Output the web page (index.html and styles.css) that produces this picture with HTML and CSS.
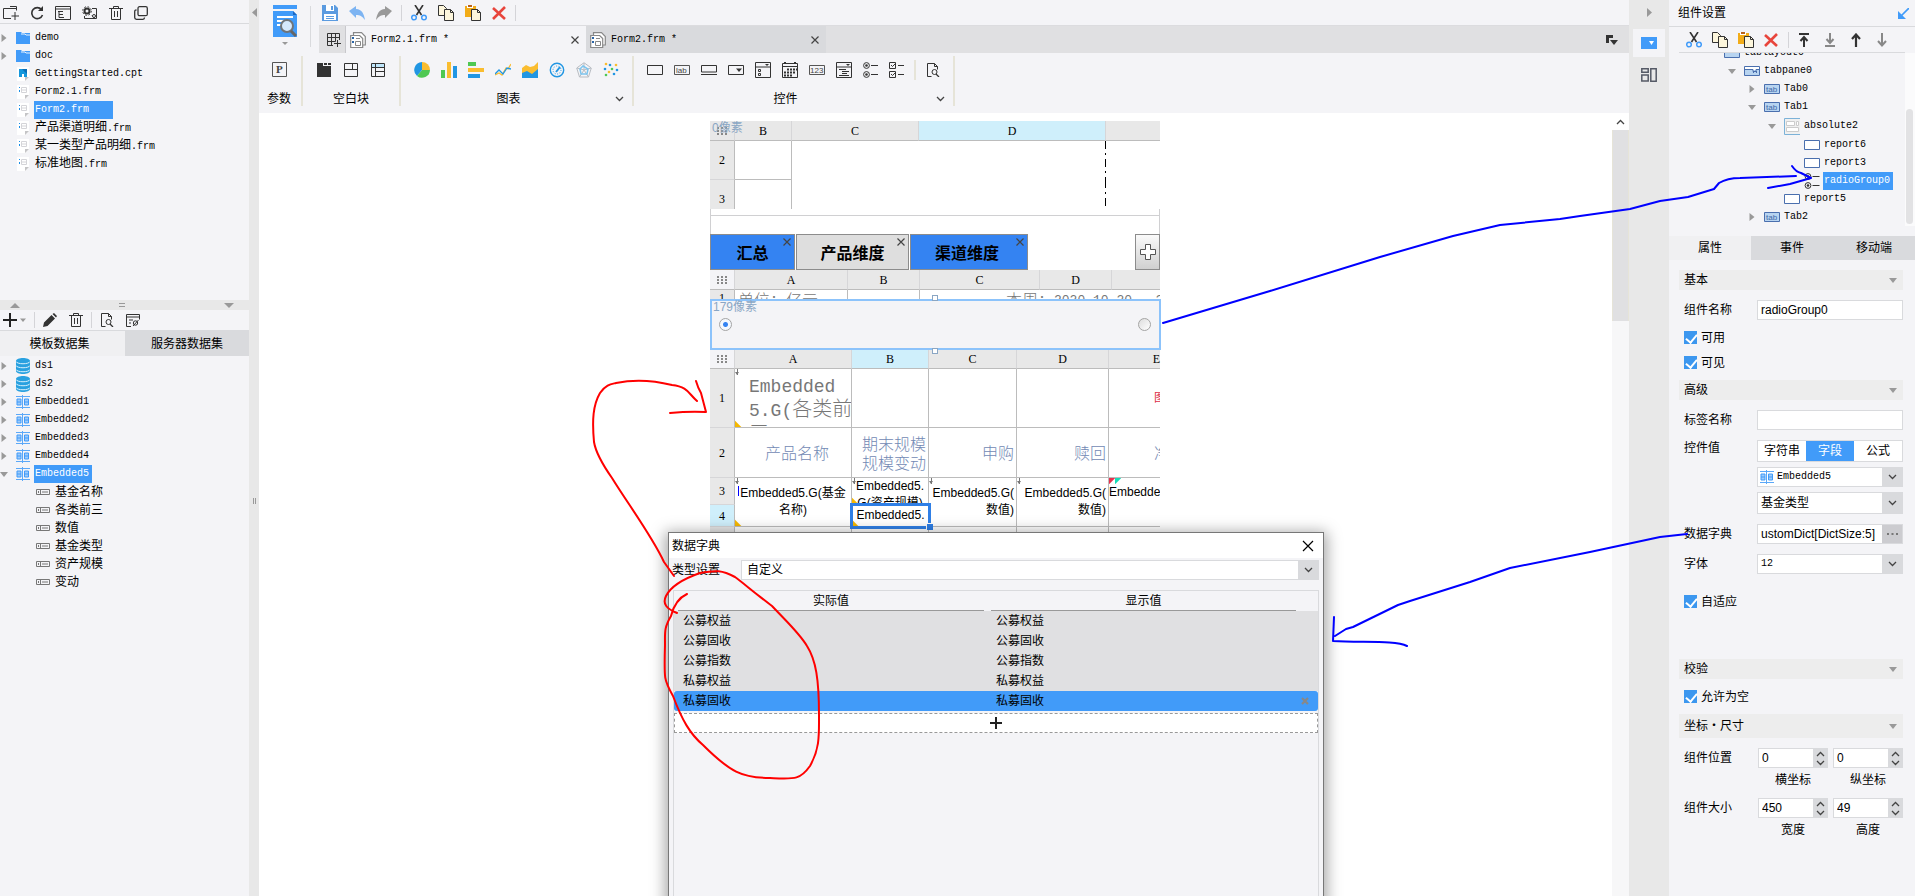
FILE: index.html
```html
<!DOCTYPE html>
<html lang="zh-CN">
<head>
<meta charset="utf-8">
<title>Form2.1.frm</title>
<link rel="stylesheet" href="styles.css">
</head>
<body>
<svg class="defs" aria-hidden="true">
  <symbol id="i-folder" viewBox="0 0 14 12"><path d="M0 0h5l1 1h8v11H0z" fill="#419bf9"/><path d="M5 2h4l1 1h4" stroke="#e8f2fe" fill="none"/></symbol>
  <symbol id="i-cpt" viewBox="0 0 12 14"><path d="M0 0h12v10l-4 4H0z" fill="#fff"/><path d="M2 2h8v8H7V7H5v3H2z" fill="#1597dc"/><path d="M5 2h5v5z" fill="#0a6fb8"/><path d="M8 10h4l-4 4z" fill="#c4c4c6"/></symbol>
  <symbol id="i-frm" viewBox="0 0 12 14"><path d="M0 0h12v10l-4 4H0z" fill="#fff"/><path d="M4.500 2.500h5v5h-5zM5 5h5" fill="none" stroke="#d4d4d8"/><path d="M2 2h1v1H2zM2 5h1v2H2z" fill="#1b8ee6"/><path d="M8 10h4l-4 4z" fill="#c4c4c6"/></symbol>
  <symbol id="i-db" viewBox="0 0 14 16"><path d="M0 3c0-4 14-4 14 0v10c0 4-14 4-14 0z" fill="#29a1e0"/><path d="M0 3.500c1 3 13 3 14 0M0 7.500c1 3 13 3 14 0M0 11.500c1 3 13 3 14 0" stroke="#d9f0fb" fill="none"/></symbol>
  <symbol id="i-emb" viewBox="0 0 14 14"><path d="M0 1.500h14M0 12.500h14M6.500 0v14" stroke="#5ba8f8" fill="none"/><path d="M1 4h4v6H1zM8.500 4h4v6h-4z" fill="#9dcbfb" stroke="#419bf9"/><path d="M1 7h4M8.500 7h4" stroke="#419bf9"/></symbol>
  <symbol id="i-field" viewBox="0 0 14 6"><path d="M.5.5h13v5H.5zM4.500 1v4M6 3h6" stroke="#777" fill="none"/><path d="M2 2h1v2H2z" fill="#777"/></symbol>
  <symbol id="i-cut" viewBox="0 0 16 16"><path d="M4 0l6.500 10M12 0L5.500 10" stroke="#333" stroke-width="1.600" fill="none"/><circle cx="3" cy="12.500" r="2.300" fill="none" stroke="#419bf9" stroke-width="1.500"/><circle cx="13" cy="12.500" r="2.300" fill="none" stroke="#419bf9" stroke-width="1.500"/></symbol>
  <symbol id="i-copy" viewBox="0 0 16 16"><path d="M.5.5h5l3 3v7h-8z" fill="#fdf6dc" stroke="#333"/><path d="M6.500 4.500h6l3 3v8h-9z" fill="#fdf6dc" stroke="#333"/><path d="M12.500 4.500v3h3" fill="none" stroke="#333"/></symbol>
  <symbol id="i-paste" viewBox="0 0 16 16"><path d="M0 1h11v11H0z" fill="#f2ac18"/><path d="M2 0h6v3H2z" fill="#fff"/><path d="M3 0h4v2H3z" fill="#b9631a"/><path d="M6.500 4.500h6l3 3v8h-9z" fill="#fdf6dc" stroke="#333"/><path d="M12.500 4.500v3h3" fill="none" stroke="#333"/></symbol>
  <symbol id="i-del" viewBox="0 0 14 14"><path d="M1 2l12 11M13 1L1 13" stroke="#e8453c" stroke-width="2.600" fill="none"/></symbol>
  <symbol id="i-trash" viewBox="0 0 14 14"><path d="M0 2.500h14M4.500 2V.5h5V2M2.500 3v10.500h9V3M5.500 5v6M8.500 5v6" stroke="#333" fill="none"/></symbol>
  <symbol id="i-down" viewBox="0 0 9 6"><path d="M1 1l3.500 3.500L8 1" stroke="#444" stroke-width="1.300" fill="none"/></symbol>
  <symbol id="i-up" viewBox="0 0 9 6"><path d="M1 5l3.500-3.500L8 5" stroke="#444" stroke-width="1.300" fill="none"/></symbol>
  <symbol id="i-x" viewBox="0 0 8 8"><path d="M.5.5l7 7M7.500.5l-7 7" stroke="#444" stroke-width="1.200" fill="none"/></symbol>
  <symbol id="i-preview" viewBox="0 0 14 14"><path d="M5.500 13.500h-4V.5h7l3 3v3M8.500.5v3h3" stroke="#333" fill="none"/><circle cx="8.500" cy="9" r="2.500" fill="none" stroke="#333"/><path d="M10 11l3 3" stroke="#333" stroke-width="1.300"/></symbol>
  <symbol id="i-radios" viewBox="0 0 15 16"><g fill="none" stroke="#333"><circle cx="3.500" cy="3.500" r="2.900"/><circle cx="3.500" cy="12.500" r="2.900"/><path d="M8 3.500h7M8 12.500h7"/></g><circle cx="3.500" cy="3.500" r="1.300" fill="#333"/><circle cx="3.500" cy="12.500" r="1.300" fill="#333"/></symbol>
  <symbol id="i-form" viewBox="0 0 16 16"><path d="M3.500 3V.7h8l3.800 3.800V13H13" fill="#fff" stroke="#888" stroke-width="1.200"/><path d="M.7 3.500h9l3 3v9H.7z" fill="#fff" stroke="#888" stroke-width="1.200"/><path d="M2 5h2v2H2zM2 9h2v2H2z" fill="#2a66a8"/><path d="M5.500 9.500h5v4h-5zM6 6.500h4" fill="none" stroke="#888"/></symbol>
  <symbol id="i-right" viewBox="0 0 5 8"><path d="M0 0l5 4-5 4z" fill="#999"/></symbol>
  <symbol id="i-open" viewBox="0 0 8 5"><path d="M0 0h8L4 5z" fill="#999"/></symbol>
  <symbol id="i-rect" viewBox="0 0 16 10"><path d="M.5.5h15v9H.5z" fill="#fff" stroke="#4a6fae"/></symbol>
  <symbol id="i-grip" viewBox="0 0 10 8"><path d="M0 0h2v2H0zM4 0h2v2H4zM8 0h2v2H8zM0 3h2v2H0zM4 3h2v2H4zM8 3h2v2H8zM0 6h2v2H0zM4 6h2v2H4zM8 6h2v2H8z" fill="#888"/></symbol>
</svg>

<div class="app">
  <aside class="left">
    <div class="toolbar files-bar">
      <button aria-label="新建文件夹"><svg width="16" height="14"><path d="M8 12.500H.5v-10h5M7 .5h6.500v4M5 2.500h8M12 6v8M8.500 10H16" stroke="#333" fill="none"/></svg></button>
      <button aria-label="刷新"><svg width="14" height="14"><path d="M11.500 3.500A5.500 5.500 0 1 0 12.500 9" stroke="#333" stroke-width="1.600" fill="none"/><path d="M13 0v5H8z" fill="#333"/></svg></button>
      <button aria-label="定位"><svg width="16" height="14"><path d="M.5.5h15v13H.5zM.5 3h15M3 5.500h5M4 5.500v6M4 8.500h4M4 11.500h5" stroke="#333" fill="none"/></svg></button>
      <button aria-label="设置"><svg width="16" height="14"><path d="M10 2.500h4.500v10H2.500V10M10 9.500l3 3" stroke="#333" fill="none"/><circle cx="5" cy="5" r="2.500" stroke="#333" stroke-width="2" fill="none"/><circle cx="5" cy="5" r="4.300" stroke="#333" stroke-dasharray="1.700 1.700" fill="none"/><circle cx="12" cy="10" r="1.500" stroke="#333" fill="#f4f4f7"/></svg></button>
      <button aria-label="删除"><svg width="14" height="14"><use href="#i-trash"/></svg></button>
      <button aria-label="复制"><svg width="14" height="14"><rect x="4" y=".7" width="9.300" height="9" rx="1.500" fill="none" stroke="#333" stroke-width="1.300"/><path d="M2.500 4C1 4 .7 4.500.7 6v5.500c0 1 .6 1.800 1.800 1.800H9c1 0 1.500-.8 1.500-1.800" fill="none" stroke="#333" stroke-width="1.300"/></svg></button>
    </div>
    <ul class="tree files">
      <li><svg class="tw" width="5" height="8"><use href="#i-right"/></svg><svg class="ic" width="14" height="12"><use href="#i-folder"/></svg><span class="m">demo</span></li>
      <li><svg class="tw" width="5" height="8"><use href="#i-right"/></svg><svg class="ic" width="14" height="12"><use href="#i-folder"/></svg><span class="m">doc</span></li>
      <li><i class="tw"></i><svg class="ic" width="14" height="14"><use href="#i-cpt"/></svg><span class="m">GettingStarted.cpt</span></li>
      <li><i class="tw"></i><svg class="ic" width="14" height="14"><use href="#i-frm"/></svg><span class="m">Form2.1.frm</span></li>
      <li><i class="tw"></i><svg class="ic" width="14" height="14"><use href="#i-frm"/></svg><span class="m sel wide">Form2.frm</span></li>
      <li><i class="tw"></i><svg class="ic" width="14" height="14"><use href="#i-frm"/></svg><span>产品渠道明细<span class="m">.frm</span></span></li>
      <li><i class="tw"></i><svg class="ic" width="14" height="14"><use href="#i-frm"/></svg><span>某一类型产品明细<span class="m">.frm</span></span></li>
      <li><i class="tw"></i><svg class="ic" width="14" height="14"><use href="#i-frm"/></svg><span>标准地图<span class="m">.frm</span></span></li>
    </ul>
    <div class="hsplit">
      <svg width="10" height="5"><path d="M0 5h10L5 0z" fill="#999"/></svg>
      <svg width="6" height="4"><path d="M0 .5h6M0 3.500h6" stroke="#999"/></svg>
      <svg width="10" height="5"><path d="M0 0h10L5 5z" fill="#999"/></svg>
    </div>
    <div class="toolbar ds-bar">
      <button aria-label="添加"><svg width="23" height="14"><path d="M7 0v14M0 7h14" stroke="#222" stroke-width="2"/><path d="M17 5.500h6l-3 3.500z" fill="#999"/></svg></button>
      <i class="vr"></i>
      <button aria-label="编辑"><svg width="14" height="14"><path d="M0 14l1-4.500 7.500-7.500 3.500 3.500L4.500 13zM9.500 1L11 0l3 3-1 1.500z" fill="#333"/></svg></button>
      <button aria-label="删除"><svg width="14" height="14"><use href="#i-trash"/></svg></button>
      <i class="vr"></i>
      <button aria-label="预览"><svg width="14" height="14"><use href="#i-preview"/></svg></button>
      <button aria-label="属性"><svg width="14" height="13"><path d="M5 12.500H.5V.5h13v5M.5 3h13M3 6h4M3 9h2" stroke="#333" fill="none"/><circle cx="9.500" cy="9" r="2.200" stroke="#333" fill="none"/><path d="M7 12l5.500-6" stroke="#333"/></svg></button>
    </div>
    <div class="ds-tabs"><button class="on">模板数据集</button><button>服务器数据集</button></div>
    <ul class="tree sets">
      <li><svg class="tw" width="5" height="8"><use href="#i-right"/></svg><svg class="ic" width="14" height="16"><use href="#i-db"/></svg><span class="m">ds1</span></li>
      <li><svg class="tw" width="5" height="8"><use href="#i-right"/></svg><svg class="ic" width="14" height="16"><use href="#i-db"/></svg><span class="m">ds2</span></li>
      <li><svg class="tw" width="5" height="8"><use href="#i-right"/></svg><svg class="ic" width="14" height="14"><use href="#i-emb"/></svg><span class="m">Embedded1</span></li>
      <li><svg class="tw" width="5" height="8"><use href="#i-right"/></svg><svg class="ic" width="14" height="14"><use href="#i-emb"/></svg><span class="m">Embedded2</span></li>
      <li><svg class="tw" width="5" height="8"><use href="#i-right"/></svg><svg class="ic" width="14" height="14"><use href="#i-emb"/></svg><span class="m">Embedded3</span></li>
      <li><svg class="tw" width="5" height="8"><use href="#i-right"/></svg><svg class="ic" width="14" height="14"><use href="#i-emb"/></svg><span class="m">Embedded4</span></li>
      <li><svg class="tw" width="7" height="5"><use href="#i-open"/></svg><svg class="ic" width="14" height="14"><use href="#i-emb"/></svg><span class="m sel">Embedded5</span></li>
      <li class="sub"><svg class="ic" width="14" height="6"><use href="#i-field"/></svg><span>基金名称</span></li>
      <li class="sub"><svg class="ic" width="14" height="6"><use href="#i-field"/></svg><span>各类前三</span></li>
      <li class="sub"><svg class="ic" width="14" height="6"><use href="#i-field"/></svg><span>数值</span></li>
      <li class="sub"><svg class="ic" width="14" height="6"><use href="#i-field"/></svg><span>基金类型</span></li>
      <li class="sub"><svg class="ic" width="14" height="6"><use href="#i-field"/></svg><span>资产规模</span></li>
      <li class="sub"><svg class="ic" width="14" height="6"><use href="#i-field"/></svg><span>变动</span></li>
    </ul>
  </aside>

  <div class="vsplit">
    <svg width="5" height="9"><path d="M5 0v9L0 4.500z" fill="#999"/></svg>
    <svg width="3" height="6"><path d="M.5 0v6M2.500 0v6" stroke="#999"/></svg>
    <i></i>
  </div>

  <main class="center">
    <header class="head">
      <div class="logo">
        <button aria-label="菜单"><svg width="24" height="40"><path d="M0 0h24v4H0z" fill="#419bf9"/><path d="M0 6h20l4 4v22H0z" fill="#419bf9"/><path d="M20 6v4h4z" fill="#1c68c4"/><path d="M4 12h16M4 16h8M4 20h4" stroke="#fff" stroke-width="2"/><circle cx="14" cy="21" r="6" fill="#d4e8fc" stroke="#707478" stroke-width="2"/><path d="M18 26l5 5" stroke="#666" stroke-width="3"/><path d="M9 37h6l-3 3z" fill="#999"/></svg></button>
      </div>
      <div class="head-main">
        <div class="toolbar edit-bar">
          <button aria-label="保存"><svg width="16" height="16"><path d="M0 0h13l3 3v13H0z" fill="#5b9be0"/><path d="M4 0h8v6H4zM2 9h12v6H2z" fill="#fff"/><path d="M9 1h2v4H9zM4 11h8v1H4zM4 13h8v1H4z" fill="#5b9be0"/></svg></button>
          <button aria-label="撤销"><svg width="16" height="16"><path d="M0 6l7-5v3c6 0 8 5 9 11-3-4-5-5-9-5v3z" fill="#7db4f2"/></svg></button>
          <button aria-label="重做"><svg width="16" height="16"><path d="M16 6L9 1v3C3 4 1 9 0 15c3-4 5-5 9-5v3z" fill="#999"/></svg></button>
          <i class="vr"></i>
          <button aria-label="剪切"><svg width="16" height="16"><use href="#i-cut"/></svg></button>
          <button aria-label="复制"><svg width="16" height="16"><use href="#i-copy"/></svg></button>
          <button aria-label="粘贴"><svg width="16" height="16"><use href="#i-paste"/></svg></button>
          <button aria-label="删除"><svg width="14" height="14"><use href="#i-del"/></svg></button>
          <i class="vr"></i>
        </div>
        <div class="doc-tabs">
          <button class="grid-btn" aria-label="新建"><svg width="14" height="14"><path d="M6 12.500H.5V.5h12V7M.5 4.500h12M.5 8.500h8M4.500.5v12M8.500.5v8M10.500 7v7M7 10.500h7" stroke="#333" fill="none"/></svg></button>
          <div class="doc-tab on"><svg width="16" height="16"><use href="#i-form"/></svg><span class="m">Form2.1.frm *</span><button aria-label="关闭"><svg width="8" height="8"><use href="#i-x"/></svg></button></div>
          <div class="doc-tab"><svg width="16" height="16"><use href="#i-form"/></svg><span class="m">Form2.frm *</span><button aria-label="关闭"><svg width="8" height="8"><use href="#i-x"/></svg></button></div>
          <button class="more" aria-label="更多"><svg width="12" height="10"><path d="M0 0h7v3H3v5H0z" fill="#333"/><path d="M4 5h8L8 10z" fill="#333"/></svg></button>
        </div>
      </div>
    </header>

    <section class="ribbon">
      <div class="grp g1"><div class="icons"><button aria-label="参数"><svg width="15" height="15"><path d="M.5.5h14v14H.5z" fill="none" stroke="#555"/><text x="4" y="11" class="svg-serif">P</text></svg></button></div><span>参数</span></div>
      <div class="grp g2"><div class="icons">
        <button aria-label="标签块"><svg width="14" height="14"><path d="M0 0h6v3h8v11H0z" fill="#333"/><path d="M7 0h3v2H7zM11 0h3v2h-3z" fill="#333"/></svg></button>
        <button aria-label="布局块"><svg width="14" height="14"><path d="M.5.5h13v13H.5zM.5 6.500h13M8.500.5v6" fill="none" stroke="#333"/></svg></button>
        <button aria-label="报表块"><svg width="14" height="14"><path d="M1 1h12v4H1z" fill="#bfe6fb"/><path d="M.5.5h13v13H.5zM.5 4.500h13M4.500.5v13M4.500 8.500h9" fill="none" stroke="#333"/></svg></button>
      </div><span>空白块</span></div>
      <div class="grp g3"><div class="icons">
        <button aria-label="饼图"><svg width="16" height="16"><path d="M8 8V0a8 8 0 0 0-5 14z" fill="#2196e3"/><path d="M8 8V0a8 8 0 0 1 8 8z" fill="#fabd30"/><path d="M8 8h8A8 8 0 0 1 3 14z" fill="#4fc853"/></svg></button>
        <button aria-label="柱形图"><svg width="16" height="16"><path d="M0 8h4v8H0z" fill="#4fc853"/><path d="M6 0h4v16H6z" fill="#fabd30"/><path d="M12 4h4v12h-4z" fill="#2196e3"/></svg></button>
        <button aria-label="条形图"><svg width="16" height="16"><path d="M0 0h8v4H0z" fill="#4fc853"/><path d="M0 6h16v4H0z" fill="#fabd30"/><path d="M0 12h12v4H0z" fill="#2196e3"/></svg></button>
        <button aria-label="折线图"><svg width="16" height="16"><path d="M0 13l4-2 3 2 4-7 2 1 3-5" fill="none" stroke="#fabd30" stroke-width="1.300"/><path d="M0 12l4-4 4 4 4-6 4 1" fill="none" stroke="#2196e3" stroke-width="1.300"/></svg></button>
        <button aria-label="面积图"><svg width="16" height="16"><path d="M0 6l4-3 4 2 4-1 4-4v16H0z" fill="#fabd30"/><path d="M0 11l5-2 5 3 6-5v9H0z" fill="#2196e3"/></svg></button>
        <button aria-label="仪表盘"><svg width="16" height="16"><circle cx="8" cy="8" r="6.700" fill="none" stroke="#2196e3" stroke-width="1.400"/><circle cx="8" cy="8" r="4" fill="none" stroke="#2196e3" stroke-dasharray="1 1.500"/><path d="M7 10l4-5" stroke="#2196e3" stroke-width="2"/></svg></button>
        <button aria-label="雷达图"><svg width="16" height="16"><path d="M8 .7l7.300 5.300-2.800 9h-9L.7 6zM8 1v7M1 6l7 2 7-2M3.500 15L8 8l4.500 7" fill="none" stroke="#b8bcc2"/><path d="M7 4l5 3-1 5-6 0-1-5z" fill="none" stroke="#7cc4ee" stroke-width="1.500"/></svg></button>
        <button aria-label="散点图"><svg width="16" height="16"><g fill="#2196e3"><circle cx="7" cy="3" r="1.300"/><circle cx="2" cy="7" r="1.300"/><circle cx="14" cy="8" r="1.300"/><circle cx="11" cy="12" r="1.300"/></g><g fill="#fabd30"><circle cx="3" cy="2" r="1.300"/><circle cx="13" cy="3" r="1.300"/><circle cx="6" cy="10" r="1.300"/></g><g fill="#4fc853"><circle cx="9" cy="7" r="1.300"/><circle cx="3" cy="13" r="1.300"/></g></svg></button>
      </div><span>图表</span><button class="exp" aria-label="展开"><svg width="9" height="6"><use href="#i-down"/></svg></button></div>
      <div class="grp g4"><div class="icons">
        <button aria-label="文本框"><svg width="16" height="10"><path d="M.5.5h15v9H.5z" fill="none" stroke="#333"/></svg></button>
        <button aria-label="标签"><svg width="16" height="10"><path d="M.5.5h15v9H.5z" fill="none" stroke="#555"/><text x="2" y="8" class="svg-sans">lab</text></svg></button>
        <button aria-label="按钮"><svg width="16" height="10"><path d="M.5.5h15v6.500H.5zM0 9.500h16" fill="none" stroke="#333"/></svg></button>
        <button aria-label="下拉框"><svg width="16" height="10"><path d="M.5.5h15v9H.5z" fill="none" stroke="#333"/><path d="M8 3.500h6L11 7z" fill="#333"/></svg></button>
        <button aria-label="下拉复选框"><svg width="16" height="16"><path d="M.5.5h15v15H.5zM.5 5h15M3.500 7.500h2v2h-2zM3.500 11.500h2v2h-2z" fill="none" stroke="#333"/><path d="M10 2h4l-2 2z" fill="#333"/></svg></button>
        <button aria-label="日期"><svg width="16" height="16"><path d="M.5 1.500h15v14H.5zM.5 4.500h15" fill="none" stroke="#333"/><path d="M3 0v2M13 0v2" stroke="#333" stroke-width="2"/><path d="M5 7.500h10M2 10.500h12M2 13.500h9" stroke="#333" stroke-width="2" stroke-dasharray="2 1"/></svg></button>
        <button aria-label="数字"><svg width="16" height="10"><path d="M.5.5h15v9H.5z" fill="none" stroke="#555"/><text x="1" y="8" class="svg-sans">123</text></svg></button>
        <button aria-label="下拉树"><svg width="16" height="16"><path d="M.5.5h15v15H.5zM.5 5h15M3 7.500h7M6 9.500h7M6 11.500h5M3 13.500h10" fill="none" stroke="#333"/><path d="M10 2h4l-2 2z" fill="#333"/></svg></button>
        <button aria-label="单选按钮组"><svg width="15" height="16"><use href="#i-radios"/></svg></button>
        <button aria-label="复选框组"><svg width="15" height="16"><path d="M.5.5h6v6h-6zM.5 9.500h6v6h-6zM2 3l1.500 1.500L6 2M2 12l1.500 1.500L6 11M9 3.500h6M9 12.500h6" fill="none" stroke="#333"/></svg></button>
        <i class="vr"></i>
        <button aria-label="查询"><svg width="14" height="14"><use href="#i-preview"/></svg></button>
      </div><span>控件</span><button class="exp" aria-label="展开"><svg width="9" height="6"><use href="#i-down"/></svg></button></div>
    </section>

    <section class="work">
      <div class="canvas">
        <div class="form">
          <span class="px-tag">0像素</span>
          <table class="rep r1">
            <colgroup><col class="w25"><col class="w57"><col class="w127"><col class="w187"><col></colgroup>
            <thead><tr><th><svg width="10" height="8"><use href="#i-grip"/></svg></th><th>B</th><th>C</th><th class="hl">D</th><th></th></tr></thead>
            <tbody>
              <tr class="h39"><th>2</th><td></td><td class="nb"></td><td class="nb dash"></td><td class="nb"></td></tr>
              <tr class="h29"><th class="low">3</th><td class="nbb"></td><td class="nb"></td><td class="nb dash"></td><td class="nb"></td></tr>
            </tbody>
          </table>
          <div class="gap"><i></i></div>
          <div class="ftabs">
            <button class="t1">汇总<svg width="8" height="8"><use href="#i-x"/></svg></button>
            <button class="t2">产品维度<svg width="8" height="8"><use href="#i-x"/></svg></button>
            <button class="t3">渠道维度<svg width="8" height="8"><use href="#i-x"/></svg></button>
            <button class="plus" aria-label="添加标签页"><svg width="16" height="16"><path d="M5.500.5h5v5h5v5h-5v5h-5v-5h-5v-5h5z" fill="#fff" stroke="#555"/></svg></button>
          </div>
          <table class="rep r2">
            <colgroup><col class="w25"><col class="w113"><col class="w72"><col class="w120"><col class="w72"><col></colgroup>
            <thead><tr><th class="lt"><svg width="10" height="8"><use href="#i-grip"/></svg></th><th>A</th><th>B</th><th>C</th><th>D</th><th></th></tr></thead>
            <tbody><tr><th><div class="clip9">1</div></th><td><div class="clip9 big">单位：亿元</div></td><td></td><td colspan="3"><div class="clip9 big week">本周：<span>2020.10.20 ~ 2</span></div></td></tr></tbody>
          </table>
          <div class="radio-group">
            <i class="hd top"></i><i class="hd bot"></i>
            <span class="px-tag">179像素</span>
            <input type="radio" name="rg" aria-label="选项一" checked>
            <input type="radio" name="rg" aria-label="选项二">
          </div>
          <table class="rep r3">
            <colgroup><col class="w25"><col class="w117"><col class="w77"><col class="w88"><col class="w92"><col></colgroup>
            <thead><tr><th class="lt"><svg width="10" height="8"><use href="#i-grip"/></svg></th><th>A</th><th class="hl">B</th><th>C</th><th>D</th><th class="rt">E</th></tr></thead>
            <tbody>
              <tr class="h59"><th>1</th><td class="mk yl"><div class="title"><span>Embedded</span><br><span>5.G(</span>各类前<br>三<span>)</span></div></td><td></td><td></td><td></td><td class="edge red">图</td></tr>
              <tr class="h50 hd2"><th>2</th><td class="ctr">产品名称</td><td class="rt">期末规模规模变动</td><td class="rt">申购</td><td class="rt">赎回</td><td class="edge">净</td></tr>
              <tr class="h27 dt"><th>3</th><td rowspan="2" class="mk yl ctr bl">Embedded5.G(基金<br>名称)</td><td class="mk yl ctr"><div class="clip26">Embedded5.<br>G(资产规模)</div></td><td rowspan="2" class="mk rt">Embedded5.G(<br>数值)</td><td rowspan="2" class="mk rt">Embedded5.G(<br>数值)</td><td rowspan="2" class="rg"><div class="clip26 nw">Embedded5.G(</div></td></tr>
              <tr class="h22 dt"><th class="hl">4</th><td class="cur yl"><div class="clip20">Embedded5.</div></td></tr>
              <tr class="h10"><th></th><td></td><td></td><td></td><td></td><td></td></tr>
            </tbody>
          </table>
        </div>

        <div class="dialog" role="dialog" aria-label="数据字典">
          <div class="dlg-title"><span>数据字典</span><button aria-label="关闭"><svg width="12" height="12"><path d="M1 1l10 10M11 1L1 11" stroke="#000" stroke-width="1.200"/></svg></button></div>
          <div class="dlg-type"><label for="dtype">类型设置</label><div class="combo"><select id="dtype"><option>自定义</option></select><span class="arr"><svg width="9" height="6"><use href="#i-down"/></svg></span></div></div>
          <div class="dict">
            <table>
              <thead><tr><th><span>实际值</span></th><th><span>显示值</span></th></tr></thead>
              <tbody>
                <tr><td>公募权益</td><td>公募权益</td></tr>
                <tr><td>公募固收</td><td>公募固收</td></tr>
                <tr><td>公募指数</td><td>公募指数</td></tr>
                <tr><td>私募权益</td><td>私募权益</td></tr>
                <tr class="on"><td>私募固收</td><td><div class="last">私募固收<button aria-label="删除"><svg width="8" height="8"><path d="M1 1l6 6M7 1L1 7" stroke="#888" stroke-width="2.200"/></svg></button></div></td></tr>
              </tbody>
            </table>
            <button class="add" aria-label="添加一行"><svg width="12" height="12"><path d="M6 0v12M0 6h12" stroke="#222" stroke-width="2"/></svg></button>
          </div>
        </div>
      </div>
      <div class="vscroll"><button aria-label="向上滚动"><svg width="9" height="6"><use href="#i-up"/></svg></button><i></i></div>
    </section>
  </main>

  <nav class="strip">
    <svg width="5" height="9"><path d="M0 0v9l5-4.500z" fill="#999"/></svg>
    <button class="on" aria-label="组件设置"><svg width="16" height="12"><path d="M0 0h16v12H0z" fill="#419bf9"/><path d="M8 4h5l-2.500 4z" fill="#fff"/></svg></button>
    <button aria-label="组件库"><svg width="16" height="14"><path d="M.8.8h6.400v3.500H.8zM.8 7h6.400v6H.8zM9.800.8h5.400v12.400H9.800z" fill="none" stroke="#555a66" stroke-width="1.500"/></svg></button>
  </nav>

  <aside class="right">
    <div class="r-title"><span>组件设置</span><svg width="11" height="11"><path d="M11 0L2 9" stroke="#419bf9" stroke-width="1.700"/><path d="M0 3v8h8z" fill="#419bf9"/></svg></div>
    <div class="toolbar comp-bar">
      <button aria-label="剪切"><svg width="16" height="16"><use href="#i-cut"/></svg></button>
      <button aria-label="复制"><svg width="16" height="16"><use href="#i-copy"/></svg></button>
      <button aria-label="粘贴"><svg width="16" height="16"><use href="#i-paste"/></svg></button>
      <button aria-label="删除"><svg width="14" height="14"><use href="#i-del"/></svg></button>
      <i class="vr"></i>
      <button aria-label="置顶"><svg width="10" height="14"><path d="M0 1h10M5 5v9M1.500 8L5 4l3.500 4" stroke="#333" stroke-width="2" fill="none"/></svg></button>
      <button aria-label="置底"><svg width="10" height="14"><path d="M0 13h10M5 0v9M1.500 6L5 10l3.500-4" stroke="#888" stroke-width="2" fill="none"/></svg></button>
      <button aria-label="上移"><svg width="10" height="14"><path d="M5 2v12M1 6l4-4.500L9 6" stroke="#333" stroke-width="2.200" fill="none"/></svg></button>
      <button aria-label="下移"><svg width="10" height="14"><path d="M5 0v12M1 8l4 4.500L9 8" stroke="#888" stroke-width="2" fill="none"/></svg></button>
    </div>
    <div class="comp-wrap">
      <ul class="tree comps">
        <li class="d0"><i class="tw"></i><svg class="ic" width="16" height="10"><path d="M.5.5h15v9H.5z" fill="#b8d4f0" stroke="#4a6fae"/></svg><span class="m">tablayout0</span></li>
        <li class="d1"><svg class="tw" width="8" height="5"><use href="#i-open"/></svg><svg class="ic" width="16" height="10"><path d="M.5.5h15v9H.5z" fill="#fff" stroke="#4a6fae"/><path d="M1 4h14v5H1z" fill="#b8d4f0"/><path d="M1 3.500h8v2h3v-2h3M9.500 5v2M12.500 5v2" fill="none" stroke="#4a6fae"/></svg><span class="m">tabpane0</span></li>
        <li class="d2"><svg class="tw" width="5" height="8"><use href="#i-right"/></svg><svg class="ic" width="16" height="10"><path d="M.5.5h15v9H.5z" fill="#b8d4f0" stroke="#4a6fae"/><text x="2" y="8" class="svg-tab">tab</text></svg><span class="m">Tab0</span></li>
        <li class="d2"><svg class="tw" width="8" height="5"><use href="#i-open"/></svg><svg class="ic" width="16" height="10"><path d="M.5.5h15v9H.5z" fill="#b8d4f0" stroke="#4a6fae"/><text x="2" y="8" class="svg-tab">tab</text></svg><span class="m">Tab1</span></li>
        <li class="d3 tall"><svg class="tw" width="8" height="5"><use href="#i-open"/></svg><svg class="ic" width="17" height="17"><path d="M.5.5h16v16H.5z" fill="#f0f0f0" stroke="#7cb2d8"/><path d="M2.500 3.500h8v4h-8zM12.500 3.500h2v4h-2zM2.500 9.500h12v4h-12z" fill="#fff" stroke="#ccc"/></svg><span class="m">absolute2</span></li>
        <li class="d4"><i class="tw"></i><svg class="ic" width="16" height="10"><use href="#i-rect"/></svg><span class="m">report6</span></li>
        <li class="d4"><i class="tw"></i><svg class="ic" width="16" height="10"><use href="#i-rect"/></svg><span class="m">report3</span></li>
        <li class="d4"><i class="tw"></i><svg class="ic" width="15" height="16"><use href="#i-radios"/></svg><span class="m sel">radioGroup0</span></li>
        <li class="d3"><i class="tw"></i><svg class="ic" width="16" height="10"><use href="#i-rect"/></svg><span class="m">report5</span></li>
        <li class="d2"><svg class="tw" width="5" height="8"><use href="#i-right"/></svg><svg class="ic" width="16" height="10"><path d="M.5.5h15v9H.5z" fill="#b8d4f0" stroke="#4a6fae"/><text x="2" y="8" class="svg-tab">tab</text></svg><span class="m">Tab2</span></li>
      </ul>
      <div class="comp-scroll"><i></i></div>
    </div>
    <div class="r-tabs"><button class="on">属性</button><button>事件</button><button>移动端</button></div>
    <form class="props">
      <h3>基本<svg width="8" height="5"><use href="#i-open"/></svg></h3>
      <div class="row"><label for="cname">组件名称</label><input id="cname" type="text" value="radioGroup0"></div>
      <label class="check"><input type="checkbox" checked>可用</label>
      <label class="check last-check"><input type="checkbox" checked>可见</label>
      <h3>高级<svg width="8" height="5"><use href="#i-open"/></svg></h3>
      <div class="row"><label for="tname">标签名称</label><input id="tname" type="text"></div>
      <div class="row multi"><label for="vset">控件值</label>
        <div class="stack">
          <div class="seg"><button type="button">字符串</button><button type="button" class="on">字段</button><button type="button">公式</button></div>
          <div class="combo"><svg width="14" height="14"><use href="#i-emb"/></svg><select id="vset" class="m"><option>Embedded5</option></select><span class="arr"><svg width="9" height="6"><use href="#i-down"/></svg></span></div>
          <div class="combo"><select aria-label="字段名"><option>基金类型</option></select><span class="arr"><svg width="9" height="6"><use href="#i-down"/></svg></span></div>
        </div>
      </div>
      <div class="row"><label for="dict">数据字典</label><div class="combo"><input id="dict" type="text" value="ustomDict[DictSize:5]"><button type="button" class="arr dots" aria-label="编辑数据字典"><svg width="11" height="2"><path d="M0 1h11" stroke="#777" stroke-width="2" stroke-dasharray="2 2.500"/></svg></button></div></div>
      <div class="row"><label for="fsize">字体</label><div class="combo"><select id="fsize" class="m"><option>12</option></select><span class="arr"><svg width="9" height="6"><use href="#i-down"/></svg></span></div></div>
      <label class="check fit"><input type="checkbox" checked>自适应</label>
      <h3 class="valid">校验<svg width="8" height="5"><use href="#i-open"/></svg></h3>
      <label class="check empty"><input type="checkbox" checked>允许为空</label>
      <h3 class="pos">坐标・尺寸<svg width="8" height="5"><use href="#i-open"/></svg></h3>
      <div class="row pair"><span>组件位置</span>
        <div class="num"><div class="spin"><input id="px" type="text" value="0"><span class="ud"><svg width="9" height="6"><use href="#i-up"/></svg><svg width="9" height="6"><use href="#i-down"/></svg></span></div><label for="px">横坐标</label></div>
        <div class="num"><div class="spin"><input id="py" type="text" value="0"><span class="ud"><svg width="9" height="6"><use href="#i-up"/></svg><svg width="9" height="6"><use href="#i-down"/></svg></span></div><label for="py">纵坐标</label></div>
      </div>
      <div class="row pair"><span>组件大小</span>
        <div class="num"><div class="spin"><input id="pw" type="text" value="450"><span class="ud"><svg width="9" height="6"><use href="#i-up"/></svg><svg width="9" height="6"><use href="#i-down"/></svg></span></div><label for="pw">宽度</label></div>
        <div class="num"><div class="spin"><input id="ph" type="text" value="49"><span class="ud"><svg width="9" height="6"><use href="#i-up"/></svg><svg width="9" height="6"><use href="#i-down"/></svg></span></div><label for="ph">高度</label></div>
      </div>
    </form>
  </aside>
</div>

<svg class="ink" viewBox="0 0 1915 896" aria-hidden="true">
  <g fill="none" stroke="#00f" stroke-width="2" stroke-linejoin="round" stroke-linecap="round">
    <path d="M1163 323L1270 291 1380 257 1453 236 1500 225 1560 219 1580 216 1630 209 1660 201 1688 197 1714 189 1719 183C1724 180 1732 178 1740 178L1796 176M1792 166Q1796 172 1801 173L1811 178 1790 184 1768 188"/>
    <path d="M1687 534L1660 537 1590 552 1510 568 1470 582 1410 601 1398 605 1353 627 1346 629 1335 636M1334 617L1333 641C1360 643 1395 640 1407 646"/>
  </g>
  <g fill="none" stroke="#f00" stroke-width="2" stroke-linejoin="round" stroke-linecap="round">
    <path d="M674 576L664 562C652 536 628 504 612 478C598 458 595 448 594 442C592 420 593 405 600 393C606 384 612 384 616 383C640 378 660 382 672 385C688 387 688 393 697 401M696 381Q698 388 701 393L706 412Q690 411 670 413"/>
    <path d="M687 594C676 599 672 612 671 616C664 628 665 632 665 645C664 680 664 680 673 696C682 720 690 734 703 745C730 772 742 778 770 778C795 779 800 780 810 766C820 748 819 735 819 715C819 680 816 660 807 646C800 634 790 625 772 606C756 594 742 582 735 577C722 570 716 570 700 573C680 580 670 588 666 596C662 604 667 609 677 613"/>
  </g>
</svg>
</body>
</html>
```

FILE: styles.css
```css
* { box-sizing: border-box; }
body { margin: 0; height: 100vh; overflow: hidden; background: #f4f4f7; color: #000; font: 12px/18px "Liberation Sans", "Noto Sans CJK SC", sans-serif; }
button { border: 0; padding: 0; background: none; font: inherit; color: inherit; display: flex; align-items: center; justify-content: center; }
input, select { font: inherit; color: inherit; }
svg { display: block; flex: none; }
.defs { position: absolute; width: 0; height: 0; }
.m { font-family: "Liberation Mono", monospace; font-size: 10px; }
.svg-serif { font: bold 11px "Liberation Serif", serif; fill: #444; }
.svg-sans { font: 8px "Liberation Sans", sans-serif; fill: #444; }
.svg-tab { font: 8px "Liberation Sans", sans-serif; fill: #3c68a8; }
.ink { position: absolute; left: 0; top: 0; z-index: 5; width: 100vw; height: auto; pointer-events: none; }

.app { display: flex; height: 100vh; }
.left { width: 249px; display: flex; flex-direction: column; overflow: hidden; }
.toolbar { display: flex; align-items: center; }
.vr { width: 1px; height: 16px; background: #d4d4d8; }
.files-bar { height: 24px; padding: 2px 3px 0; gap: 11px; border-bottom: 1px solid #d9dadd; }

.tree { list-style: none; margin: 0; padding: 0; }
.tree li { height: 18px; display: flex; align-items: center; white-space: nowrap; }
.tree .tw { width: 8px; flex: none; }
.tree .ic { margin-left: 8px; width: 14px; }
.tree li > span { margin-left: 4px; padding: 0 1px; line-height: 18px; }
.tree .sel { background: #419bf9; color: #fff; padding-right: 3px; }
.tree .sel.wide { padding-right: 24px; }
.tree .sub { padding-left: 28px; }
.files { height: 276px; padding-top: 5px; }
.sets { padding-top: 1px; }
.hsplit { height: 10px; background: #e8e8e8; display: flex; justify-content: space-between; align-items: center; padding: 0 15px 0 10px; }
.ds-bar { height: 20px; padding-left: 3px; gap: 8px; }
.ds-bar .vr + button { margin-right: 4px; }
.ds-tabs { display: flex; height: 26px; border-top: 1px solid #d9dadd; background: #d9dadd; }
.ds-tabs button { flex: 127; }
.ds-tabs .on { flex: 122; padding-right: 6px; background: #f0f0f2; }

.vsplit { width: 10px; background: #e8e8e8; display: flex; flex-direction: column; align-items: center; justify-content: space-between; padding: 8px 0; }
.vsplit svg:nth-child(2) { margin-top: 96px; }

.center { flex: 1; min-width: 0; display: flex; flex-direction: column; }
.head { display: flex; height: 53px; }
.logo { width: 60px; padding: 5px 0 0 14px; background: linear-gradient(#d9dadd, #d9dadd) 51px 6px / 1px 41px no-repeat; }
.head-main { flex: 1; display: flex; flex-direction: column; }
.edit-bar { height: 25px; padding-left: 3px; gap: 11px; }
.edit-bar .vr { margin: 0 -2px; }
.doc-tabs { flex: 1; display: flex; border-top: 1px solid #dcdcdf; background: #e0e0e2; }
.grid-btn { width: 27px; padding-left: 4px; border-right: 1px solid #c8c8cc; }
.doc-tab { width: 240px; padding: 0 7px 0 4px; display: flex; align-items: center; gap: 5px; background: #d9dadd; }
.doc-tab.on { background: #f4f4f7; }
.doc-tab button { margin-left: auto; }
.doc-tab span { white-space: pre; }
.more { margin-left: auto; padding-right: 11px; }

.ribbon { height: 60px; display: flex; padding-top: 3px; }
.grp { height: 50px; position: relative; display: flex; flex-direction: column; align-items: center; justify-content: space-between; border-right: 2px solid #e6e4d8; line-height: 14px; }
.icons { height: 27px; display: flex; align-items: center; gap: 11px; }
.grp > span { height: 14px; }
.exp { position: absolute; right: 8px; bottom: 4px; }
.g1 { width: 44px; } .g1 .icons, .g1 > span { margin-right: 2px; }
.g2 { width: 98px; } .g2 .icons { gap: 13px; }
.g3 { width: 233px; } .g3 > span { margin-right: 16px; }
.g4 { width: 321px; } .g4 > span { margin-right: 16px; }
.g4 .vr { height: 20px; width: 2px; background: #e6e4d8; margin: 0 -1px; }

.work { flex: 1; display: flex; min-height: 0; }
.canvas { flex: 1; position: relative; background: #fff; overflow: hidden; padding-top: 8px; }
.vscroll { width: 17px; background: #f7f7f8; }
.vscroll button { width: 17px; height: 17px; background: #fff; }
.vscroll i { display: block; height: 191px; background: #e0e0e2; border: 1px solid #e6e4d8; border-width: 0 1px; }

.form { width: 451px; margin: 0 auto; position: relative; padding-right: 1px; }
.px-tag { position: absolute; left: 2px; top: 0; line-height: 14px; color: #8aa6c4; }
.rep { width: 100%; table-layout: fixed; border-collapse: separate; border-spacing: 0; }
.rep th { padding: 0; font: 12px/18px "Liberation Serif", serif; background: #e8e8e8; border-right: 1px solid #d6d6d8; border-bottom: 1px solid #d6d6d8; }
.rep th svg { margin: 0 auto; }
.rep thead th { height: 20px; border-bottom-color: #bcbcbc; }
.rep tbody th { border-right-color: #bcbcbc; }
.rep th.low { padding-top: 9px; border-bottom: 0; }
.rep th.hl { background: #cfeffb; }
.rep th.lt { background: #f4f4f7; }
.rep td { padding: 0; border-right: 1px solid #bcbcbc; border-bottom: 1px solid #bcbcbc; }
.rep tr > :last-child { border-right: 0; }
.rep th.rt, .rep td.rt { text-align: right; }
.w25 { width: 25px; } .w57 { width: 57px; } .w127 { width: 127px; } .w187 { width: 187px; }
.w113 { width: 113px; } .w72 { width: 72px; } .w120 { width: 120px; }
.w117 { width: 117px; } .w77 { width: 77px; } .w88 { width: 88px; } .w92 { width: 92px; }
.h39 { height: 39px; } .h29 { height: 29px; } .h59 { height: 59px; } .h50 { height: 50px; }
.h27 { height: 27px; } .h22 { height: 22px; } .h10 { height: 10px; }
.rep td.nb { border: 0; }
.rep td.nbb { border-bottom: 0; }
.rep td.dash { background: repeating-linear-gradient(#000 0 8px, transparent 8px 12px, #000 12px 14px, transparent 14px 18px) right / 1px 100% no-repeat; }
.gap { height: 25px; border: 1px solid #d0d0d2; border-width: 0 1px; padding-top: 6px; }
.gap i { display: block; height: 1px; background: #d0d0d2; }
.ftabs { display: flex; height: 36px; gap: 1px; }
.ftabs button { position: relative; border: 1px solid #8c8c8c; background: #3483f2; font: bold 16px "Liberation Sans", "Noto Sans CJK SC", sans-serif; }
.ftabs button > svg { position: absolute; right: 3px; top: 3px; }
.ftabs .t1 { width: 85px; } .ftabs .t2 { width: 113px; background: #dedede; } .ftabs .t3 { width: 118px; padding-right: 4px; }
.ftabs .plus { width: 25px; margin-left: auto; background: linear-gradient(#fafafa, #d0d0d0); }
.ftabs .plus > svg { position: static; }
.clip9 { height: 9px; overflow: hidden; line-height: 17px; }
.big { font-size: 16px; line-height: 22px; padding: 0 3px; color: #777; font-weight: 300; white-space: nowrap; }
.big span { font-family: "Liberation Mono", monospace; font-size: 13px; vertical-align: top; }
.week { padding-left: 86px; }
.r2 tbody th, .r2 tbody td { border-bottom: 0; }
.radio-group { width: 451px; height: 51px; position: relative; border: 2px solid #8cc3fb; background: #f4f4f7; display: flex; align-items: center; justify-content: space-between; padding: 0 8px 0 7px; z-index: 1; margin-bottom: -1px; }
.radio-group input { appearance: none; width: 13px; height: 13px; margin: 0; border: 1px solid #a4a4a4; border-radius: 50%; background: linear-gradient(135deg, #ddd, #fff); }
.radio-group input:checked { background: radial-gradient(circle, #3483f2 0 2px, #f4f8fe 3px); }
.radio-group .px-tag { left: 1px; top: -1px; }
.hd { position: absolute; left: 220px; width: 6px; height: 6px; border: 1px solid #8aa6c4; background: #fff; }
.hd.top { top: -6px; } .hd.bot { bottom: -6px; }

.r3 td { position: relative; }
.ctr { text-align: center; }
.title { height: 56px; margin-left: 14px; overflow: hidden; font: 300 20px/23px "Noto Sans CJK SC", sans-serif; color: #777; white-space: nowrap; padding-top: 2px; }
.title span { font: 18px/18px "Liberation Mono", monospace; }
.rep td.edge { padding: 0 0 0 45px; overflow: hidden; white-space: nowrap; text-align: left; }
.red { color: #dc2f4a; }
.hd2 td { color: #7289b4; font: 300 16px/19px "Noto Sans CJK SC", sans-serif; padding: 0 2px 0 10px; }
.dt td { font: 12px/17px "Liberation Sans", "Noto Sans CJK SC", sans-serif; }
.dt td[rowspan] { padding: 0 2px; white-space: nowrap; }
.dt td.rg { padding: 0; vertical-align: top; }
.clip26 { height: 26px; overflow: hidden; white-space: nowrap; }
.clip26.nw { height: 46px; padding-top: 6px; }
.clip20 { height: 20px; overflow: hidden; text-align: center; line-height: 19px; }
.mk::before { content: ""; position: absolute; left: 2px; top: 0; width: 1px; height: 6px; background: #777; }
.mk::after { content: ""; position: absolute; left: 0; top: 3px; border: 2px solid transparent; border-top: 3px solid #777; border-bottom: 0; }
.yl { background: linear-gradient(45deg, #f5b800 4px, transparent 5px); }
.bl { background: linear-gradient(#00f, #00f) 3px 8px / 1px 10px no-repeat, linear-gradient(45deg, #f5b800 4px, transparent 5px); }
.rg { background: linear-gradient(135deg, #e8304e 4px, transparent 5px) 0 0 / 6px 6px no-repeat, linear-gradient(135deg, #16dcb8 4px, transparent 5px) 6px 0 / 6px 6px no-repeat; }
.cur { outline: 3px solid #2f7fe6; outline-offset: -1px; z-index: 1; }
.cur::after { content: ""; position: absolute; right: -4px; bottom: -4px; width: 6px; height: 6px; background: #2f7fe6; border: 1px solid #fff; border-width: 1px 0 0 1px; }

.dialog { position: absolute; left: 409px; top: 419px; width: 656px; height: 420px; z-index: 2; display: flex; flex-direction: column; background: #f4f4f7; border: 1px solid #777; box-shadow: 0 3px 14px 3px rgba(0, 0, 0, .35); }
.dlg-title { height: 25px; background: #fff; display: flex; align-items: center; justify-content: space-between; padding: 0 9px 0 3px; }
.dlg-type { display: flex; align-items: center; padding: 2px 4px 0 3px; gap: 21px; }
.combo { display: flex; align-items: center; flex: 1; min-width: 0; height: 20px; border: 1px solid #d9dadd; background: #fff; }
.combo select, .combo input { appearance: none; flex: 1; min-width: 0; height: 18px; border: 0; background: none; padding: 0 3px; outline: 0; }
.combo > svg { margin-left: 2px; }
.dlg-type select { padding-left: 5px; }
.arr { width: 20px; height: 100%; background: #d9dadd; display: flex; align-items: center; justify-content: center; }
.dict { flex: 1; margin: 10px 4px 0; border: 1px solid #d9dadd; }
.dict table { width: 100%; table-layout: fixed; border-spacing: 0; }
.dict th { height: 20px; padding: 0 3px 0 4px; font-weight: 400; }
.dict th:last-child { padding-right: 22px; }
.dict th span { display: block; height: 20px; line-height: 20px; border-bottom: 1px solid #999; }
.dict th:first-child { width: 313px; }
.dict td { height: 20px; padding: 0 9px; line-height: 18px; background: #e0e0e2; }
.dict .on td { background: #419bf9; }
.dict .on td:first-child { border-radius: 3px 0 0 3px; }
.dict .on td:last-child { border-radius: 0 3px 3px 0; }
.last { display: flex; justify-content: space-between; align-items: center; }
.add { width: 100%; height: 20px; margin-top: 2px; background: #fff; border: 1px dashed #999; }

.strip { width: 40px; background: #e8e8e8; display: flex; flex-direction: column; align-items: center; padding-top: 8px; }
.strip button { width: 32px; height: 28px; }
.strip .on { margin: 12px 0 4px; background: #f4f4f7; }

.right { width: 246px; display: flex; flex-direction: column; }
.r-title { height: 27px; padding: 0 6px 0 9px; display: flex; align-items: center; justify-content: space-between; border-bottom: 1px solid #d9dadd; }
.comp-bar { height: 26px; margin: 0 10px; padding-left: 7px; gap: 10px; border-bottom: 1px solid #d9dadd; }
.comp-bar button:nth-last-child(-n+3) { margin-left: 6px; }
.comp-wrap { height: 173px; display: flex; margin-bottom: 10px; overflow: hidden; }
.comps { flex: 1; margin-top: -9px; }
.comps .ic { width: 16px; }
.comps li > span { margin-left: 3px; }
.comps .tall { height: 20px; }
.d0 { padding-left: 39px; } .d1 { padding-left: 59px; } .d2 { padding-left: 79px; } .d3 { padding-left: 99px; } .d4 { padding-left: 119px; }
.comp-scroll { width: 10px; background: #fbfbfc; padding: 56px 2px 0 1px; }
.comp-scroll i { display: block; height: 115px; border-radius: 4px; background: #e2e2e4; }
.r-tabs { display: flex; height: 24px; }
.r-tabs button { flex: 1; background: #d9dadd; }
.r-tabs .on { background: #f0f0f2; }

.props { padding: 10px 12px 0 10px; }
.props h3 { margin: 0; height: 20px; padding: 0 6px 0 5px; background: #ededed; font-size: 12px; font-weight: 400; display: flex; align-items: center; justify-content: space-between; }
.row { display: flex; align-items: center; margin: 10px 0; padding-left: 5px; }
.row > label, .row > span { width: 73px; flex: none; }
.row > input { flex: 1; min-width: 0; height: 20px; border: 1px solid #d9dadd; background: #fff; padding: 0 3px; }
.multi { align-items: flex-start; margin-bottom: 9px; }
.multi > label { margin-top: -1px; }
.stack { flex: 1; display: flex; flex-direction: column; gap: 5px; }
.stack .combo { flex: none; }
.stack .combo:last-child { height: 22px; }
.seg { display: flex; height: 22px; border: 1px solid #d9dadd; background: #fff; }
.seg button { flex: 1; }
.seg .on { background: #419bf9; color: #fff; }
.dots { background: #ccccd0; }
.check { display: flex; align-items: center; gap: 4px; height: 15px; margin: 10px 0 0 5px; }
.check input { appearance: none; width: 13px; height: 13px; margin: 0; background: #3c97ef; position: relative; }
.check input::after { content: ""; position: absolute; left: 4px; top: 1px; width: 5px; height: 9px; border: solid #fff; border-width: 0 2px 2px 0; transform: rotate(40deg); }
.last-check { margin: 10px 0 10px 5px; }
.fit { margin-top: 20px; }
.props .valid { margin-top: 50px; }
.props .empty { margin-bottom: 10px; }
.props .pos { height: 24px; }
.pair { align-items: flex-start; margin: 10px 0 0; }
.pair > span { line-height: 20px; width: 74px; }
.num { flex: 1; text-align: center; }
.num + .num { margin-left: 5px; }
.num label { display: block; height: 20px; line-height: 24px; }
.spin { display: flex; height: 20px; border: 1px solid #d9dadd; background: #fff; }
.spin input { flex: 1; min-width: 0; width: 0; border: 0; padding: 0 3px; background: none; }
.ud { width: 14px; background: #d9dadd; display: flex; flex-direction: column; align-items: center; justify-content: space-around; }
```
